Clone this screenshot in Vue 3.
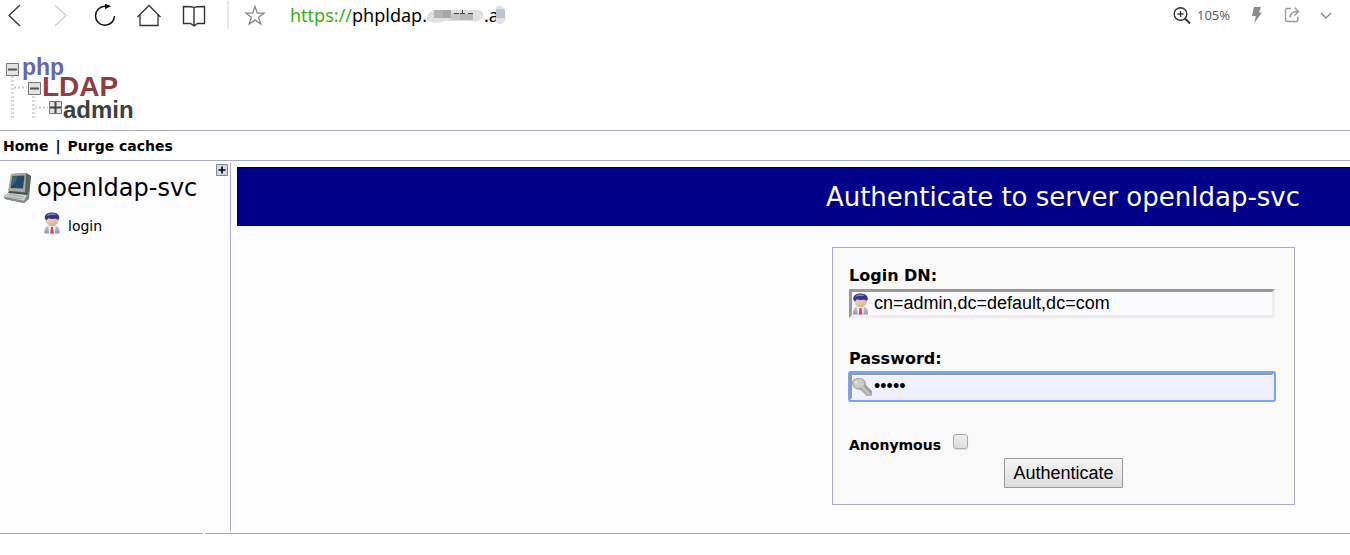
<script setup>
import { ref } from 'vue'

const loginDn = ref('cn=admin,dc=default,dc=com')
const password = ref('admin')
const anonymous = ref(false)
</script>

<template>
  <div class="page">
    <svg class="defs" width="0" height="0" aria-hidden="true">
      <defs>
        <linearGradient id="suit" x1="0" y1="0" x2="0" y2="1">
          <stop offset="0" stop-color="#c9cddd" />
          <stop offset="1" stop-color="#9296ae" />
        </linearGradient>
        <linearGradient id="face" x1="0" y1="0" x2="1" y2="1">
          <stop offset="0" stop-color="#f8d9bd" />
          <stop offset="1" stop-color="#d9a583" />
        </linearGradient>
        <symbol id="user" viewBox="0 0 16 22">
          <path d="M.5 21.500c-.3-4 .2-7 4.500-8h6c4.300 1 4.800 4 4.500 8z" fill="url(#suit)" />
          <path d="M4.500 13.500h7L10.800 21.500H5.200z" fill="#f4f4fa" />
          <path d="M7 15h2l.8 6.500H6.200z" fill="#d5434a" />
          <path d="M1.500 6h13c.5 4.500-2.500 8.500-6.500 8.500S1 10.500 1.500 6z" fill="url(#face)" />
          <path d="M.8 6.500C.4 2.500 3.500.5 8 .5s7.600 2 7.300 6l-1.300 1.500c-1-1.200-2.300-1.500-4-1.200-2.300.4-4 .2-5.500-.5L2.400 8.500z" fill="#34368a" />
          <path d="M2.500 3.800c1.500-2.500 7-3 10.500-1-3.500-.3-7 .1-10.500 1z" fill="#8790c7" />
        </symbol>
      </defs>
    </svg>

    <header class="browser">
      <button class="tool back" aria-label="Back">
        <svg width="20" height="24" viewBox="0 0 20 24"><path d="M15 2 4 12.500 15 23" fill="none" stroke="#333" stroke-width="1.300" /></svg>
      </button>
      <button class="tool forward" aria-label="Forward">
        <svg width="20" height="24" viewBox="0 0 20 24"><path d="M5 2 16 12.500 5 23" fill="none" stroke="#ccc" stroke-width="1.200" /></svg>
      </button>
      <button class="tool reload" aria-label="Reload">
        <svg width="24" height="24" viewBox="0 0 24 24"><path d="M16 3.300H12A9.500 9.500 0 1 0 21.500 13" fill="none" stroke="#111" stroke-width="1.500" /><path d="M12 .8 18 3.300 12 6z" fill="#000" /></svg>
      </button>
      <button class="tool home" aria-label="Home page">
        <svg width="24" height="24" viewBox="0 0 24 24"><path d="M.5 14 12 2.500 23.500 14M3 12V22.500H21V12" fill="none" stroke="#333" stroke-width="1.300" /></svg>
      </button>
      <button class="tool book" aria-label="Reading list">
        <svg width="24" height="24" viewBox="0 0 24 24"><path d="M12 4.500C10.500 3.500 8 3.500 1.500 3.500V20.500H8.500L12 23 15.500 20.500H22.500V3.500C16 3.500 13.500 3.500 12 4.500V23" fill="none" stroke="#333" stroke-width="1.400" /></svg>
      </button>
      <span class="divider"></span>
      <button class="tool star" aria-label="Bookmark">
        <svg width="22" height="24" viewBox="0 0 22 24"><path d="M11 3.500 13.300 10.200H20L14.600 14.300 16.700 21 11 16.900 5.300 21 7.400 14.300 2 10.200H8.700z" fill="none" stroke="#888" stroke-width="1.300" /></svg>
      </button>
      <div class="address">
        <span class="scheme">https://</span><span>phpldap.</span>
        <svg class="mask" width="57" height="24" viewBox="0 0 57 24" aria-hidden="true">
          <path d="M0 13C3 7 7 7 12 7H50C55 7 57 10 56 14C53 19 47 19 42 18H18C12 21 3 20 0 17z" fill="#e0e0e0" />
          <path d="M7 7h9v8H7z" fill="#b3b3b3" /><path d="M16 7h8v8h-8z" fill="#a4a7a8" />
          <path d="M24 10h9v7h-9z" fill="#c8c8c8" /><path d="M33 11h13v6H33z" fill="#b8b8b8" />
          <path d="M27 10.500h5M35.500 7v4M33 10.500h5M41 10.500h5" stroke="#444" />
        </svg>
        <span>.a</span>
        <svg class="mask-end" width="11" height="24" viewBox="0 0 11 24" aria-hidden="true">
          <path d="M1 4c4-3 8-1 9 5s1 11-4 12-6-4-5-7z" fill="#dfe2e6" />
          <path d="M1 6h9v9H1z" fill="#bdc4cd" />
        </svg>
      </div>
      <svg class="zoom-icon" width="18" height="18" viewBox="0 0 18 18" aria-hidden="true"><circle cx="7.500" cy="8" r="6.300" fill="none" stroke="#333" stroke-width="1.400" /><path d="M12 12.500 17 17.500" stroke="#333" stroke-width="2" /><path d="M4.500 8h6M7.500 5v6" stroke="#333" stroke-width="1.300" /></svg>
      <span class="zoom-level">105%</span>
      <button class="tool flash" aria-label="Turbo">
        <svg width="12" height="18" viewBox="0 0 12 18"><path d="M3 1H10L8 6.500H11L3 17.500 5 10H1z" fill="#8a8a8a" /></svg>
      </button>
      <button class="tool share" aria-label="Share">
        <svg width="18" height="18" viewBox="0 0 18 18"><path d="M7 2.500H3Q1.500 2.500 1.500 4V14Q1.500 15.500 3 15.500H12.500Q14 15.500 14 14V10.500M6 11.500C6 7.500 8 5.500 14 5.500M10.500 1.500 14.500 5.500 10.500 9.500" fill="none" stroke="#999" stroke-width="1.400" /></svg>
      </button>
      <button class="tool more" aria-label="More">
        <svg width="12" height="18" viewBox="0 0 12 18"><path d="M1 7 6 12 11 7" fill="none" stroke="#888" stroke-width="1.400" /></svg>
      </button>
    </header>

    <div class="brand">
      <svg width="140" height="68" viewBox="0 0 140 68" role="img" aria-label="phpLDAPadmin">
        <path d="M12.500 22V65M33.500 42V65" stroke="#d8d8d8" stroke-width="3" stroke-dasharray="2 2" />
        <path d="M14 33.500H27M35 53.500H48" stroke="#ccc" stroke-width="2" stroke-dasharray="2 2" />
        <g fill="#e2e2e2" stroke="#777">
          <path d="M6.500 9.500H18.500V21.500H6.500z" /><path d="M28.500 28.500H40.500V40.500H28.500z" /><path d="M49.500 47.500H61.500V59.500H49.500z" />
        </g>
        <path d="M8 15.500H17M30 34.500H39" stroke="#555" stroke-width="2" />
        <path d="M50 53.500H61M55.500 48V59" stroke="#444" stroke-width="2" />
        <text x="22" y="21" class="php">php</text>
        <text x="42" y="42" class="ldap">LDAP</text>
        <text x="63" y="64" class="admin">admin</text>
      </svg>
    </div>

    <nav class="menu"><a href="#">Home</a><span>|</span><a href="#">Purge caches</a></nav>

    <div class="content">
      <aside class="tree">
        <button class="expand" aria-label="Expand">
          <svg width="12" height="12" viewBox="0 0 12 12"><path d="M.5.5h11v11H.5z" fill="#d5dde2" stroke="#78868f" /><path d="M2.500 6h7M6 2.500v7" stroke="#000" stroke-width="1.600" /></svg>
        </button>
        <div class="server">
          <svg width="28" height="32" viewBox="0 0 28 32" aria-hidden="true">
            <path d="M7 2 22 1 27 4 25 27 20 31 1 27 0 24 6 20z" fill="#777d79" />
            <path d="M7 2 23 1 22 20 4 19z" fill="#a4aaa5" />
            <path d="M8.500 4 20.500 3.500 19 16.500 6.500 16z" fill="#254b68" />
            <path d="M9 4.500 14 4.500 10 12 7 14z" fill="#42657c" />
            <path d="M22 1 27 4 25 20 21 21z" fill="#5c635f" />
            <path d="M5 19 24 21 23 23 4 21z" fill="#46504a" />
            <path d="M4 21 23 23 20 29 0 25z" fill="#d0d3ce" />
            <path d="M0 25 20 29 25 23V26L20 31 1 27z" fill="#848b84" />
            <path d="M5 22.500 20 25M3 24.500 18 27" stroke="#9da39c" />
          </svg>
          <span>openldap-svc</span>
        </div>
        <a class="login" href="#">
          <svg width="16" height="22" aria-hidden="true"><use href="#user" /></svg>
          <span>login</span>
        </a>
      </aside>

      <main>
        <h1>Authenticate to server openldap-svc</h1>
        <form @submit.prevent>
          <label for="dn">Login DN:</label>
          <div class="field">
            <svg width="17" height="22" aria-hidden="true"><use href="#user" /></svg>
            <input id="dn" v-model="loginDn" type="text" />
          </div>
          <label for="password">Password:</label>
          <div class="field active">
            <svg width="20" height="20" viewBox="0 0 20 20" aria-hidden="true">
              <path d="M0 6C0 2 4 .5 8 1s6.500 3 6 7L20 14V18.500L15 19 8.500 13C4 13 0 10 0 6z" fill="#a9a9a5" />
              <path d="M1 6C1 3 5 1.500 8 2s5 3 4 6-8 4.500-10 1z" fill="#ccccc8" />
              <path d="M10 10 17 17" stroke="#c8c8c4" stroke-width="2" />
              <path d="M13 9 19 15" stroke="#8d8d88" /><circle cx="4" cy="5.500" r="1.300" fill="#eee" />
            </svg>
            <input id="password" v-model="password" type="password" />
          </div>
          <div class="anonymous">
            <label for="anonymous">Anonymous</label>
            <input id="anonymous" v-model="anonymous" type="checkbox" />
          </div>
          <button class="submit" type="submit">Authenticate</button>
        </form>
      </main>
    </div>
    <footer><span></span><span></span></footer>
  </div>
</template>

<style>
body { margin: 0; background: #fff; overflow-x: hidden; }
</style>

<style scoped>
.page { font-family: "DejaVu Sans", sans-serif; font-size: 14px; color: #000; }
* { box-sizing: border-box; }
.defs { position: absolute; }
a { color: inherit; text-decoration: none; }
.tool, .expand { padding: 0; border: 0; background: none; display: flex; }
.browser { display: flex; align-items: center; height: 30px; padding: 0 18px 0 5px; font-family: "Open Sans", sans-serif; }
.forward { margin-left: 25px; }
.reload { margin-left: 23px; }
.home { margin-left: 20px; }
.book { margin-left: 21px; }
.divider { width: 2px; height: 28px; margin-left: 21px; background: #e8e8e8; }
.star { margin-left: 15px; }
.address { display: flex; align-items: center; flex: 1; margin-left: 24px; font-family: "Noto Sans", sans-serif; font-size: 18px; line-height: 30px; }
.scheme { color: #38b010; }
.mask-end { margin-left: -4px; }
.zoom-level { margin-left: 6px; font-size: 13px; line-height: 32px; color: #555; }
.flash { margin-left: 21px; }
.share { margin-left: 21px; }
.more { margin-left: 18px; }
.brand { height: 101px; padding-top: 24px; border-bottom: 1px solid #aac; }
.brand svg { display: block; }
.brand text { font-family: "Liberation Sans", sans-serif; font-weight: bold; }
.php { font-size: 23px; fill: #6666ad; }
.ldap { font-size: 28px; fill: #913b43; }
.admin { font-size: 24px; fill: #404040; }
.menu { display: flex; gap: 7px; height: 30px; padding-left: 3px; border-bottom: 1px solid #aac; font-size: 14px; font-weight: bold; line-height: 30px; }
.content { display: flex; min-height: 368px; margin-top: 2px; background: #fcfcfe; }
.tree { position: relative; width: 231px; flex: none; border-right: 1px solid #aac; }
.expand { position: absolute; top: 1px; right: 2px; }
.server { display: flex; align-items: center; gap: 5px; height: 32px; margin: 9px 0 0 4px; font-size: 24px; }
.login { display: flex; align-items: center; gap: 8px; margin: 8px 0 0 44px; font-size: 14px; }
.login span { padding-top: 6px; }
main { flex: 1; margin: 4px 0 0 6px; display: flex; flex-direction: column; align-items: flex-end; }
h1 { align-self: stretch; margin: 0; padding: 2px 50px 0 0; border: 1px solid #000; border-right: 0; background: #00008b; color: #fff; font-size: 26px; font-weight: normal; line-height: 55px; text-align: right; }
form { display: flex; flex-direction: column; width: 463px; min-height: 258px; margin: 21px 55px 0 0; padding: 16px; border: 1px solid #aac; background: #f9f9f9; }
form label { font-size: 16px; font-weight: bold; line-height: 24px; }
.field { display: flex; align-items: center; height: 29px; margin: 1px 3px 29px 0; border: 3px solid; border-color: #999 #eee #eee #999; background: #fbfbff; }
.field svg { flex: none; margin: 0 5px 0 0; }
.field input { flex: 1; min-width: 0; height: 20px; padding: 0; border: 0; outline: 0; background: none; color: #000; font-family: "Liberation Sans", Arial, sans-serif; font-size: 18px; }
.active { outline: 2px solid #74a5f8; outline-offset: -1px; border-radius: 2px; background: #f0f0ff; }
.active svg { margin-right: 2px; }
.anonymous { display: flex; align-items: center; gap: 12px; height: 22px; }
.anonymous label { padding-top: 8px; font-size: 14px; }
.anonymous input { appearance: none; width: 15px; height: 15px; margin: 0; border: 1px solid #aaa; border-radius: 3px; background: linear-gradient(#eee, #ddd); box-shadow: 0 1px 1px #ddd; }
.submit { align-self: center; height: 30px; margin-top: 6px; padding: 0 8px; border: 1px solid #999; border-radius: 1px; background: linear-gradient(#f6f6f6, #ddd); color: #000; font-family: "Liberation Sans", Arial, sans-serif; font-size: 18px; }
footer { display: flex; gap: 2px; margin-top: 2px; }
footer span { width: 203px; height: 1px; background: #aac; }
footer span:last-child { flex: 1; }
</style>
